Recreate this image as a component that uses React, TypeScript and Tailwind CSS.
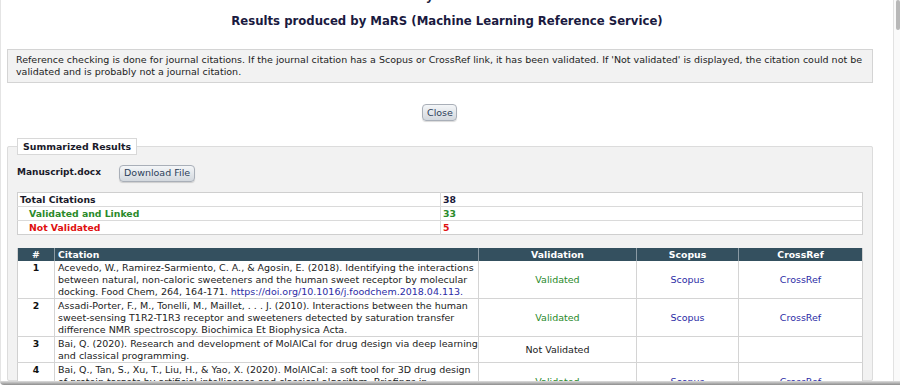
import React from "react";

type Row = {
  n: number;
  lines: React.ReactNode[];
  status: "ok" | "no";
};

const rows: Row[] = [
  {
    n: 1,
    lines: [
      "Acevedo, W., Ramirez-Sarmiento, C. A., & Agosin, E. (2018). Identifying the interactions",
      "between natural, non-caloric sweeteners and the human sweet receptor by molecular",
      <>
        docking. Food Chem, 264, 164-171.{" "}
        <span className="text-[#2b2ba6]">https://doi.org/10.1016/j.foodchem.2018.04.113.</span>
      </>,
    ],
    status: "ok",
  },
  {
    n: 2,
    lines: [
      "Assadi-Porter, F., M., Tonelli, M., Maillet, . . . J. (2010). Interactions between the human",
      "sweet-sensing T1R2-T1R3 receptor and sweeteners detected by saturation transfer",
      "difference NMR spectroscopy. Biochimica Et Biophysica Acta.",
    ],
    status: "ok",
  },
  {
    n: 3,
    lines: [
      "Bai, Q. (2020). Research and development of MolAICal for drug design via deep learning",
      "and classical programming.",
    ],
    status: "no",
  },
  {
    n: 4,
    lines: [
      "Bai, Q., Tan, S., Xu, T., Liu, H., & Yao, X. (2020). MolAICal: a soft tool for 3D drug design",
      "of protein targets by artificial intelligence and classical algorithm. Briefings in",
      "Bioinformatics.",
    ],
    status: "ok",
  },
];

const btn =
  "h-[17px] px-[4px] rounded-[4px] border border-[#a9afb8] bg-gradient-to-b from-[#f4f6f8] to-[#d3d8de] text-[9.5px] leading-[14px] text-[#2c3e5a] shadow-[0_1px_1px_rgba(0,0,0,0.15)]";

export default function App() {
  return (
    <div
      className="w-[900px] h-[385px] overflow-hidden bg-white flex flex-col text-[9.5px] text-[#111]"
      style={{ fontFamily: '"DejaVu Sans", Verdana, sans-serif' }}
    >
      <div className="flex flex-1 min-h-0">
        {/* page */}
        <div className="w-[893px] flex flex-col min-h-0 overflow-hidden border-l border-[#e4e4e4]">
          <div className="h-[5px] overflow-hidden flex justify-center">
            <div className="-mt-[11px] pr-[10px] text-[12px] font-bold text-[#1c1c3c] leading-[14px]">
              System
            </div>
          </div>
          <h1 className="mt-[10px] text-center text-[11.7px] font-bold text-[#1a1a40] leading-[14px]">
            Results produced by MaRS (Machine Learning Reference Service)
          </h1>

          <div className="ml-[6px] w-[866px] mt-[21px] border border-[#d4d4d4] bg-[#f2f2f2] px-[8px] py-[4px] leading-[12px] text-[#222] whitespace-nowrap">
            Reference checking is done for journal citations. If the journal citation has a Scopus or CrossRef link, it has been validated. If 'Not validated' is displayed, the citation could not be
            <br />
            validated and is probably not a journal citation.
          </div>

          <div className="mt-[21px] flex justify-center">
            <button className={`${btn} w-[35px] -ml-[15px]`}>Close</button>
          </div>

          <fieldset className="ml-[6px] w-[866px] mt-[17px] border border-[#dcdcdc] bg-[#f2f2f2] rounded-[2px] px-[9px] pb-[20px] min-h-0">
            <legend className="bg-white border border-[#d8d8d8] px-[5px] h-[17px] font-bold text-[9.4px] leading-[15px] text-[#1a1a2a]">
              Summarized Results
            </legend>

            <div className="mt-[9px] flex items-center gap-[18px] h-[18px]">
              <span className="font-bold text-[9px] text-[#1a1a2a]">Manuscript.docx</span>
              <button className={btn}>Download File</button>
            </div>

            <table className="mt-[10px] w-[846px] table-fixed border-collapse bg-white border border-[#cfcfcf] font-bold text-[9.3px] leading-[12px]">
              <tbody>
                <tr className="h-[14px] border-b border-[#dadada]">
                  <td className="w-[423px] pl-[2px] border-r border-[#dadada] text-[#1a1a2a]">Total Citations</td>
                  <td className="pl-[2px] text-[#1a1a3a]">38</td>
                </tr>
                <tr className="h-[14px] border-b border-[#dadada]">
                  <td className="pl-[11px] border-r border-[#dadada] text-[#2a8a2a]">Validated and Linked</td>
                  <td className="pl-[2px] text-[#2a8a2a]">33</td>
                </tr>
                <tr className="h-[14px]">
                  <td className="pl-[11px] border-r border-[#dadada] text-[#e01010]">Not Validated</td>
                  <td className="pl-[2px] text-[#e01010]">5</td>
                </tr>
              </tbody>
            </table>

            <table className="mt-[13px] w-[846px] table-fixed border-collapse bg-white leading-[12px] border-x border-[#d0d0d0]">
              <thead>
                <tr className="h-[13px] bg-[#34505f] text-white font-bold text-[9.3px]">
                  <th className="w-[37px] border-r border-[#8a9aa4]">#</th>
                  <th className="w-[424px] text-left pl-[3px] border-r border-[#8a9aa4]">Citation</th>
                  <th className="w-[158px] border-r border-[#8a9aa4]">Validation</th>
                  <th className="w-[102px] border-r border-[#8a9aa4]">Scopus</th>
                  <th>CrossRef</th>
                </tr>
              </thead>
              <tbody>
                {rows.map((r) => (
                  <tr key={r.n} className="border-b border-[#d4d4d4]">
                    <td className="align-top text-center font-bold text-[9.3px] pt-[1px] border-r border-[#d4d4d4]">{r.n}</td>
                    <td className="align-top pl-[3px] pt-[1px] pb-0 border-r border-[#d4d4d4] text-[#222] whitespace-nowrap overflow-hidden">
                      {r.lines.map((l, i) => (
                        <div key={i}>{l}</div>
                      ))}
                    </td>
                    <td className="text-center border-r border-[#d4d4d4]">
                      {r.status === "ok" ? (
                        <span className="text-[#2a8a2a]">Validated</span>
                      ) : (
                        <span className="text-[#222]">Not Validated</span>
                      )}
                    </td>
                    <td className="text-center border-r border-[#d4d4d4] text-[#2b2ba6]">
                      {r.status === "ok" ? "Scopus" : ""}
                    </td>
                    <td className="text-center text-[#2b2ba6]">{r.status === "ok" ? "CrossRef" : ""}</td>
                  </tr>
                ))}
              </tbody>
            </table>
          </fieldset>
        </div>

        {/* scrollbar */}
        <div className="w-[7px] border-l border-[#e2e2e2] bg-[#fafafa] flex justify-end">
          <div className="w-[4px] h-[30px] rounded-[2px] bg-[#b8b8b8]" />
        </div>
      </div>
      <div className="h-[4px] shrink-0 rounded-bl-[6px] bg-gradient-to-b from-[#dedede] to-[#8d8d8d]" />
    </div>
  );
}
